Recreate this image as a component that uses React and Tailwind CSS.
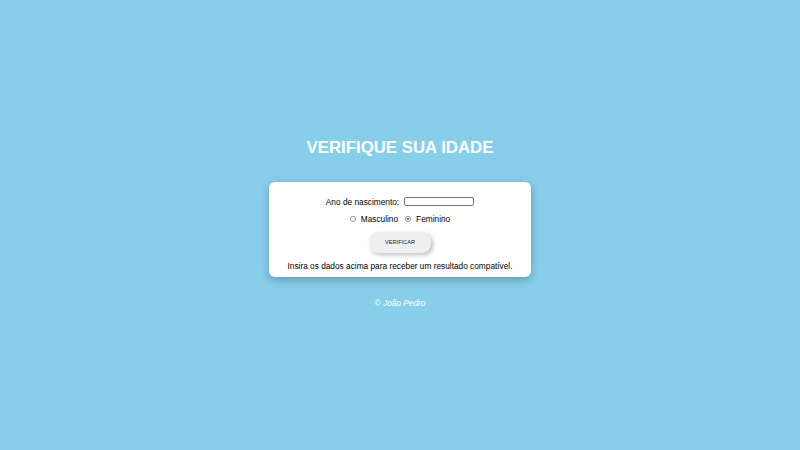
export default function App() {
  return (
    <div
      className="w-[800px] h-[450px] bg-[#87ceeb] flex flex-col items-center justify-center pb-[5px]"
      style={{ fontFamily: '"Liberation Sans", Arial, sans-serif' }}
    >
      <h1 className="text-white font-bold text-[16.8px] leading-[20px]">VERIFIQUE SUA IDADE</h1>
      <div className="mt-[24px] w-[262px] h-[95px] bg-white rounded-[6px] shadow-[0_3px_8px_rgba(0,0,0,0.25)] flex flex-col items-center pt-[15px]">
        <div className="flex items-center text-[8.3px] text-black leading-[10px]">
          <span>Ano de nascimento:</span>
          <span className="ml-[5px] w-[70px] h-[9px] border border-[#767676] rounded-[2px] bg-white"></span>
        </div>
        <div className="mt-[7px] flex items-center text-[8.3px] text-black leading-[10px]">
          <span className="w-[6px] h-[6px] rounded-full border border-[#9a9a9a] bg-white"></span>
          <span className="ml-[5px]">Masculino</span>
          <span className="ml-[7px] w-[6px] h-[6px] rounded-full border border-[#9a9a9a] bg-white flex items-center justify-center">
            <span className="w-[2px] h-[2px] rounded-full bg-[#555]"></span>
          </span>
          <span className="ml-[5px]">Feminino</span>
        </div>
        <div className="mt-[8px] w-[62px] h-[21px] rounded-[9px] bg-[#efefef] shadow-[2px_2px_4px_rgba(0,0,0,0.25)] flex items-center justify-center text-[5.6px] text-[#222]">
          VERIFICAR
        </div>
        <div className="mt-[8px] text-[8.3px] text-black leading-[10px]">
          Insira os dados acima para receber um resultado compatível.
        </div>
      </div>
      <div className="mt-[21px] text-white italic text-[8.3px] leading-[10px]">© João Pedro</div>
    </div>
  );
}
